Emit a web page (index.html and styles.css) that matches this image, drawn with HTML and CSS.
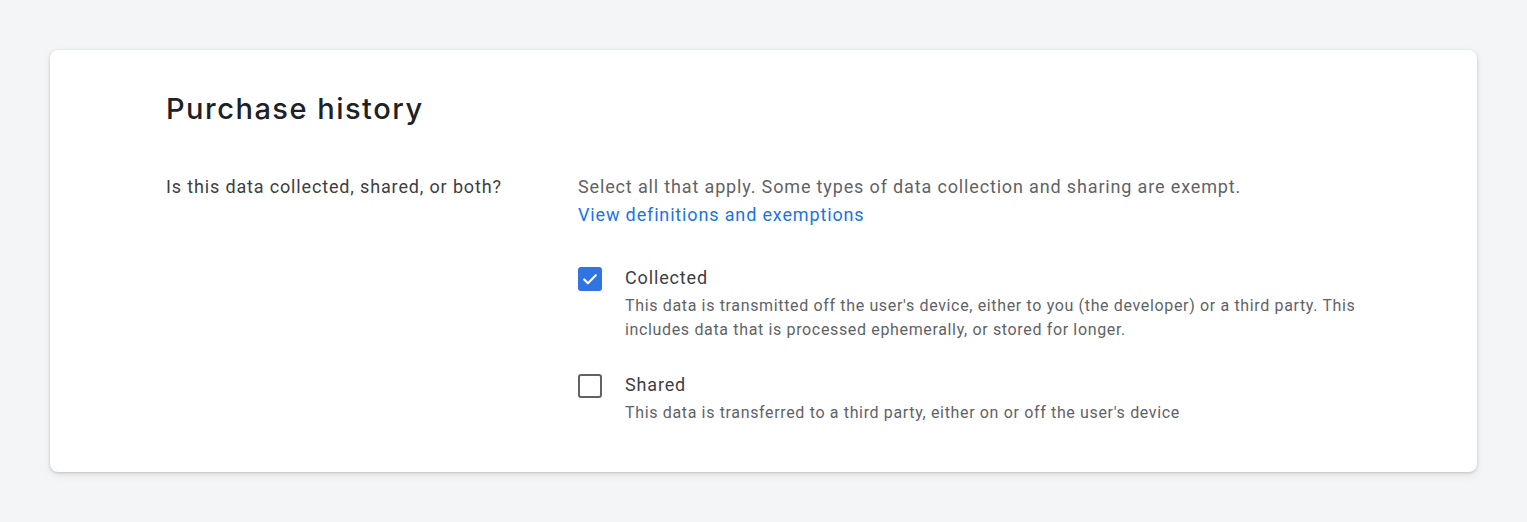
FILE: index.html
```
<!DOCTYPE html>
<html lang="en">
<head>
    <meta charset="UTF-8">
    <meta name="viewport" content="width=device-width, initial-scale=1.0">
    <title>Purchase history</title>
    <link rel="stylesheet" href="styles.css">
</head>
<body>
    <main class="card">
        <h2 class="card-title">Purchase history</h2>
        <div class="question">
            <div class="question-label">Is this data collected, shared, or both?</div>
            <div class="question-body">
                <p class="hint">Select all that apply. Some types of data collection and sharing are exempt.</p>
                <a href="#" class="hint-link">View definitions and exemptions</a>

                <label class="option">
                    <span class="box checked">
                        <svg viewBox="0 0 24 24" width="20" height="20">
                            <path d="M5 12.5l4.5 4.5L19 7.5" fill="none" stroke="#fff" stroke-width="2.6" stroke-linecap="round" stroke-linejoin="round"/>
                        </svg>
                    </span>
                    <span class="option-text">
                        <span class="option-name">Collected</span>
                        <span class="option-desc">This data is transmitted off the user's device, either to you (the developer) or a third party. This includes data that is processed ephemerally, or stored for longer.</span>
                    </span>
                </label>

                <label class="option">
                    <span class="box"></span>
                    <span class="option-text">
                        <span class="option-name">Shared</span>
                        <span class="option-desc">This data is transferred to a third party, either on or off the user's device</span>
                    </span>
                </label>
            </div>
        </div>
    </main>
</body>
</html>
```

FILE: styles.css
```
body {
    margin: 0;
    padding: 50px;
    background-color: #f4f5f7;
    font-family: Roboto, "Liberation Sans", sans-serif;
    color: #202124;
}

.card {
    background-color: white;
    border-radius: 8px;
    box-shadow: 0 1px 3px rgba(60, 64, 67, 0.25), 0 3px 8px rgba(60, 64, 67, 0.08);
    height: 422px;
    box-sizing: border-box;
    padding: 41px 116px 0;
}

.card-title {
    margin: 0;
    font-family: Inter, Roboto, sans-serif;
    font-size: 29px;
    font-weight: 500;
    line-height: 36px;
    letter-spacing: 1.5px;
    color: #202124;
}

.question {
    display: grid;
    grid-template-columns: 412px 1fr;
    margin-top: 46px;
    letter-spacing: 0.85px;
}

.question-label {
    font-size: 18px;
    line-height: 28px;
    color: #3c4043;
}

.hint {
    margin: 0;
    font-size: 18px;
    line-height: 28px;
    color: #5f6368;
}

.hint-link {
    display: block;
    font-size: 18px;
    line-height: 28px;
    color: #1a73e8;
    text-decoration: none;
}

.option {
    display: flex;
    gap: 23px;
    margin-top: 35px;
    max-width: 817px;
}

.option + .option {
    margin-top: 29px;
}

.box {
    flex: none;
    width: 24px;
    height: 24px;
    box-sizing: border-box;
    border: 2.5px solid #5f6368;
    border-radius: 3px;
    display: flex;
    align-items: center;
    justify-content: center;
    margin-top: 3px;
}

.box.checked {
    background-color: #2f74e0;
    border-color: #2f74e0;
}

.option-text {
    display: flex;
    flex-direction: column;
}

.option-name {
    font-size: 18px;
    line-height: 28px;
    color: #3c4043;
}

.option-desc {
    margin-top: 2px;
    font-size: 16px;
    line-height: 24px;
    letter-spacing: 0.65px;
    color: #5f6368;
}
```
